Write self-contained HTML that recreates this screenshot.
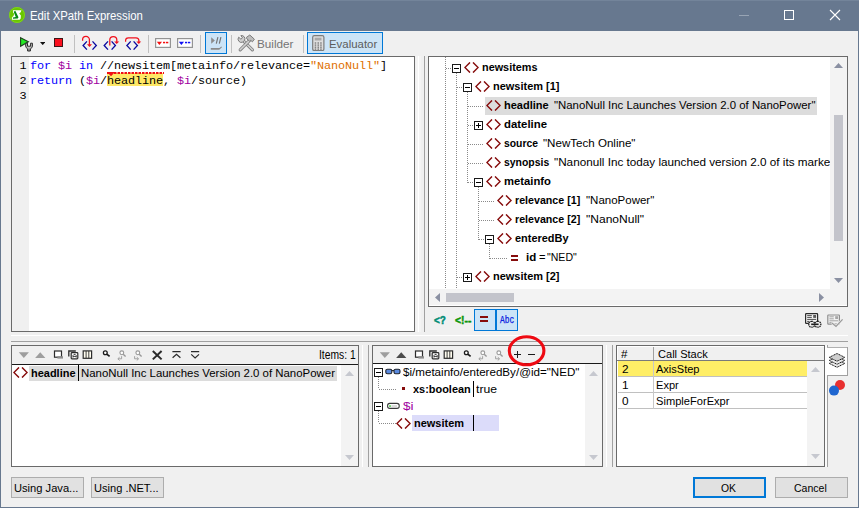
<!DOCTYPE html>
<html lang="en"><head><meta charset="utf-8"><title>Edit XPath Expression</title>
<style>
html,body{margin:0;padding:0;}
body{width:859px;height:508px;overflow:hidden;background:#f0f0f0;position:relative;font-family:"Liberation Sans",sans-serif;font-size:12px;}
#w{position:absolute;left:0;top:0;width:859px;height:508px;overflow:hidden;}
#w div,#w span,#w svg{position:absolute;box-sizing:content-box;}
.t{white-space:pre;display:block;transform-origin:0 0;}
.clip{overflow:hidden;}
</style></head><body><div id="w">

<div style="left:0px;top:0px;width:859px;height:31px;background:#67788f;"></div>
<div style="left:0px;top:0px;width:859px;height:1px;background:#73849a;"></div>
<div style="left:0px;top:31px;width:1px;height:477px;background:#67788f;"></div>
<div style="left:858px;top:31px;width:1px;height:477px;background:#67788f;"></div>
<div style="left:0px;top:507px;width:859px;height:1px;background:#67788f;"></div>
<svg style="left:8px;top:6px;" width="18" height="18" viewBox="8 6 18 18"><circle cx="17" cy="15" r="8" fill="#6ac600"/><circle cx="17" cy="15" r="7.5" fill="none" stroke="#82d424" stroke-width="0.9"/><path d="M12.9 10.2 H21.4 L20.7 12.2 L19.2 13.5 L20.9 15.6 L20.7 18.6 L19.6 19.7 H12 L11.8 17.6 L13.5 16 L14.2 13.8 L13 12.4 Z" fill="#fff"/><path d="M13.7 11.7 L15.3 10.8 L17.9 16 L18.5 17.3 L17.8 18.5 L13 18.8 L12.8 17.5 L15.7 17 Z" fill="#078a14"/></svg>
<span class="t" style="left:29.90px;top:8.00px;height:16px;line-height:16px;font-size:12px;color:#fff;transform:scaleX(0.9448);">Edit XPath Expression</span>
<div style="left:739px;top:15px;width:10px;height:1px;background:#98a4b4;"></div>
<div style="left:784px;top:10px;width:9px;height:9px;border:1px solid #fff;width:8px;height:8px;"></div>
<svg style="left:829px;top:9px;" width="12" height="12" viewBox="0 0 12 12"><path d="M1 1 L11 11 M11 1 L1 11" stroke="#fff" stroke-width="1.1" fill="none"/></svg>
<svg style="left:16px;top:34px;" width="20" height="20" viewBox="16 34 20 20"><path d="M20.6 37.7 L28.4 41.7 L20.6 46.2 Z" fill="#24ea24" stroke="#1e3e1e" stroke-width="1.1"/><path d="M25.7 43.2 V46 A3.4 3.2 0 0 0 27.6 48.8 V51 H30.4 V48.8 A3.4 3.2 0 0 0 32.4 46 V43.2 H30.6 V46.2 H27.5 V43.2 Z" fill="#bcbcbc" stroke="#2a2a2a" stroke-width="1"/><path d="M29 48.6 V51" stroke="#383838" stroke-width="0.6"/></svg>
<svg style="left:40px;top:42px;" width="5.4" height="3.1" viewBox="0 0 5.4 3.1"><polygon points="0,0 5.4,0 2.7,3.1" fill="#111"/></svg>
<div style="left:54px;top:38px;width:7px;height:7px;background:#fb101e;border:1px solid #3c1616;"></div>
<div style="left:74px;top:35px;width:1px;height:18px;background:#c0c0c0;"></div>
<svg style="left:78px;top:32px;" width="68" height="24" viewBox="78 32 68 24"><path d="M86.89999999999999 41.4 L83.1 45.5 L86.89999999999999 49.6 M92.5 41.4 L96.3 45.5 L92.5 49.6" fill="none" stroke="#0a0aa0" stroke-width="1.35"/><path d="M82.6 40.8 V39.6 A3.4 3.2 0 0 1 89.4 39.6 V45" fill="none" stroke="#f0101c" stroke-width="1.25"/><path d="M87 44.2 H92 L89.5 46.9 Z" fill="#f0101c"/><path d="M108.0 41.4 L104.2 45.5 L108.0 49.6 M111.60000000000001 41.4 L115.4 45.5 L111.60000000000001 49.6" fill="none" stroke="#0a0aa0" stroke-width="1.35"/><path d="M109.8 45.6 V39.8 A3.5 3.3 0 0 1 116.8 39.8 V42" fill="none" stroke="#f0101c" stroke-width="1.25"/><path d="M114.2 41.4 H119.2 L116.7 44.1 Z" fill="#f0101c"/><path d="M130.70000000000002 41.4 L126.9 45.5 L130.70000000000002 49.6 M133.6 41.4 L137.4 45.5 L133.6 49.6" fill="none" stroke="#0a0aa0" stroke-width="1.35"/><path d="M125.6 41.8 V40.6 A2.8 2.8 0 0 1 128.4 37.8 H136 A2.9 2.9 0 0 1 138.9 40.7 V42" fill="none" stroke="#f0101c" stroke-width="1.25"/><path d="M136.4 41.4 H141.2 L138.8 44.1 Z" fill="#f0101c"/></svg>
<div style="left:148px;top:35px;width:1px;height:18px;background:#c0c0c0;"></div>
<svg style="left:155px;top:38px;" width="16" height="10" viewBox="0 0 16 10"><rect x="0.6" y="0.6" width="14.8" height="8.8" fill="#fff" stroke="#949494" stroke-width="1.2"/><path d="M1.8 3.8 H7 L4.4 7 Z" fill="#f41010"/><rect x="8" y="3.8" width="2.2" height="1.5" fill="#f41010"/><rect x="11" y="3.8" width="2.3" height="1.5" fill="#f41010"/></svg>
<svg style="left:177px;top:38px;" width="16" height="10" viewBox="0 0 16 10"><rect x="0.6" y="0.6" width="14.8" height="8.8" fill="#fff" stroke="#949494" stroke-width="1.2"/><path d="M1.8 3.8 H7 L4.4 7 Z" fill="#1010f4"/><rect x="8" y="3.8" width="2.2" height="1.5" fill="#1010f4"/><rect x="11" y="3.8" width="2.3" height="1.5" fill="#1010f4"/></svg>
<div style="left:200px;top:35px;width:1px;height:18px;background:#c0c0c0;"></div>
<div style="left:205px;top:32px;width:20px;height:20px;background:#cce4f7;border:1px solid #0078d7;"></div>
<svg style="left:206px;top:33px;" width="20" height="20" viewBox="206 33 20 20"><path d="M211.2 37.2 L214.9 40.5 L211.2 43.8 Z" fill="#8c8c8c"/><path d="M217.9 37.1 L216.3 43.6 M220.9 37.1 L219.3 43.6" stroke="#757575" stroke-width="1.2" fill="none"/><path d="M210.8 48 H219.4 L221.4 46.6 L222 47.2 L219.2 49.8 H210.8 Z" fill="#8a8a8a"/></svg>
<div style="left:231px;top:35px;width:1px;height:18px;background:#c0c0c0;"></div>
<svg style="left:236px;top:33px;" width="22" height="21" viewBox="236 33 22 21"><g stroke-linecap="round"><path d="M252.4 49.8 L243.4 40.8" stroke="#808080" stroke-width="3.2"/><path d="M252.4 49.8 L243.4 40.8" stroke="#d2d2d2" stroke-width="1.5"/><path d="M240.2 49.8 L249.6 40.4" stroke="#808080" stroke-width="3.2"/><path d="M240.2 49.8 L249.6 40.4" stroke="#d2d2d2" stroke-width="1.5"/></g><path d="M246.4 37.4 L249.8 35 L254.4 39.2 L252.4 41.8 L250.8 40.4 L249.6 41.2 L246.8 38.8 Z" fill="#bdbdbd" stroke="#7c7c7c" stroke-width="1"/><path d="M238.7 37.2 L240.9 39.2 L242.5 37.8 L240.9 35.6 A3.3 3.3 0 0 1 244.6 40.2 L242.6 42.2 A3.3 3.3 0 0 1 238.7 37.2 Z" fill="#cfcfcf" stroke="#7c7c7c" stroke-width="1"/></svg>
<span class="t" style="left:256.50px;top:36.00px;height:16px;line-height:16px;font-size:11.8px;color:#747474;transform:scaleX(0.9910);">Builder</span>
<div style="left:303px;top:35px;width:1px;height:18px;background:#c0c0c0;"></div>
<div style="left:307px;top:32px;width:74px;height:20px;background:#cce4f7;border:1px solid #0078d7;"></div>
<svg style="left:312px;top:35px;" width="13" height="16" viewBox="0 0 13 16"><rect x="0.7" y="0.7" width="11.2" height="14.8" rx="1.6" fill="#dedede" stroke="#7c7c7c" stroke-width="1.2"/><rect x="2.7" y="2.7" width="6.8" height="2.8" fill="#a9a9a9"/><rect x="2.7" y="7.3" width="1.5" height="1.4" fill="#7c7c7c"/><rect x="5.5" y="7.3" width="1.5" height="1.4" fill="#7c7c7c"/><rect x="8.2" y="7.3" width="1.5" height="1.4" fill="#7c7c7c"/><rect x="2.7" y="9.4" width="1.5" height="1.4" fill="#7c7c7c"/><rect x="5.5" y="9.4" width="1.5" height="1.4" fill="#7c7c7c"/><rect x="8.2" y="9.4" width="1.5" height="1.4" fill="#7c7c7c"/><rect x="2.7" y="11.5" width="1.5" height="1.4" fill="#7c7c7c"/><rect x="5.5" y="11.5" width="1.5" height="1.4" fill="#7c7c7c"/><rect x="8.2" y="11.5" width="1.5" height="1.4" fill="#7c7c7c"/><rect x="2.7" y="13.4" width="1.5" height="1.4" fill="#7c7c7c"/><rect x="5.5" y="13.4" width="1.5" height="1.4" fill="#7c7c7c"/><rect x="8.2" y="13.4" width="1.5" height="1.4" fill="#7c7c7c"/></svg>
<span class="t" style="left:329.10px;top:36.00px;height:16px;line-height:16px;font-size:11.8px;color:#5c5c5c;transform:scaleX(0.9669);">Evaluator</span>
<div style="left:11px;top:56px;width:402px;height:274px;border:1px solid #6a6a6a;background:#fff;"></div>
<div style="left:12px;top:57px;width:17px;height:274px;background:#f0f0f0;"></div>
<div style="left:107px;top:73px;width:56px;height:13px;background:#ffe866;"></div>
<span class="t" style="left:19.50px;top:59.36px;height:15px;line-height:15px;font-size:11.8px;letter-spacing:-0.080px;color:#000;font-family:'Liberation Mono',monospace;">1</span>
<span class="t" style="left:19.50px;top:74.36px;height:15px;line-height:15px;font-size:11.8px;letter-spacing:-0.080px;color:#000;font-family:'Liberation Mono',monospace;">2</span>
<span class="t" style="left:19.50px;top:89.36px;height:15px;line-height:15px;font-size:11.8px;letter-spacing:-0.080px;color:#000;font-family:'Liberation Mono',monospace;">3</span>
<span class="t" style="left:30.00px;top:59.36px;height:15px;line-height:15px;font-size:11.8px;letter-spacing:-0.080px;color:#0000ff;font-family:'Liberation Mono',monospace;">for</span>
<span class="t" style="left:58.00px;top:59.36px;height:15px;line-height:15px;font-size:11.8px;letter-spacing:-0.080px;color:#a000a0;font-family:'Liberation Mono',monospace;">$i</span>
<span class="t" style="left:79.00px;top:59.36px;height:15px;line-height:15px;font-size:11.8px;letter-spacing:-0.080px;color:#0000ff;font-family:'Liberation Mono',monospace;">in</span>
<span class="t" style="left:100.00px;top:59.36px;height:15px;line-height:15px;font-size:11.8px;letter-spacing:-0.080px;color:#000;font-family:'Liberation Mono',monospace;">//newsitem[metainfo/relevance=</span>
<span class="t" style="left:310.00px;top:59.36px;height:15px;line-height:15px;font-size:11.8px;letter-spacing:-0.080px;color:#e07000;font-family:'Liberation Mono',monospace;">&quot;NanoNull&quot;</span>
<span class="t" style="left:380.00px;top:59.36px;height:15px;line-height:15px;font-size:11.8px;letter-spacing:-0.080px;color:#000;font-family:'Liberation Mono',monospace;">]</span>
<span class="t" style="left:30.00px;top:74.36px;height:15px;line-height:15px;font-size:11.8px;letter-spacing:-0.080px;color:#0000ff;font-family:'Liberation Mono',monospace;">return</span>
<span class="t" style="left:79.00px;top:74.36px;height:15px;line-height:15px;font-size:11.8px;letter-spacing:-0.080px;color:#000;font-family:'Liberation Mono',monospace;">(</span>
<span class="t" style="left:86.00px;top:74.36px;height:15px;line-height:15px;font-size:11.8px;letter-spacing:-0.080px;color:#a000a0;font-family:'Liberation Mono',monospace;">$i</span>
<span class="t" style="left:100.00px;top:74.36px;height:15px;line-height:15px;font-size:11.8px;letter-spacing:-0.080px;color:#000;font-family:'Liberation Mono',monospace;">/headline,</span>
<span class="t" style="left:177.00px;top:74.36px;height:15px;line-height:15px;font-size:11.8px;letter-spacing:-0.080px;color:#a000a0;font-family:'Liberation Mono',monospace;">$i</span>
<span class="t" style="left:191.00px;top:74.36px;height:15px;line-height:15px;font-size:11.8px;letter-spacing:-0.080px;color:#000;font-family:'Liberation Mono',monospace;">/source)</span>
<svg style="left:106px;top:71px;" width="60" height="7" viewBox="106 71 60 7"><path d="M107 73 H164" stroke="#f01018" stroke-width="2" stroke-dasharray="2.5 1"/><path d="M107 72 H115 L111 76.2 Z" fill="#f01018"/></svg>
<div style="left:416px;top:56px;width:5px;height:276px;background:#f4f4f4;"></div>
<div style="left:418px;top:56px;width:1px;height:276px;background:#fff;"></div>
<div style="left:424px;top:56px;width:1px;height:276px;background:#a0a0a0;"></div>
<div style="left:428px;top:56px;width:418px;height:249px;border:1px solid #6a6a6a;background:#fff;"></div>
<div style="left:830px;top:57px;width:17px;height:232px;background:#f3f3f3;"></div>
<div style="left:429px;top:289px;width:418px;height:16px;background:#f3f3f3;"></div>
<svg style="left:834px;top:63px;" width="9" height="5" viewBox="0 0 9 5"><polygon points="0,5 4.5,0 9,5" fill="#8a90a2"/></svg>
<svg style="left:834px;top:278px;" width="9" height="5" viewBox="0 0 9 5"><polygon points="0,0 9,0 4.5,5" fill="#8a90a2"/></svg>
<div style="left:834px;top:115px;width:9px;height:126px;background:#c3c4cb;"></div>
<svg style="left:435px;top:293px;" width="5" height="9" viewBox="0 0 5 9"><polygon points="5,0 0,4.5 5,9" fill="#8a90a2"/></svg>
<svg style="left:819px;top:293px;" width="5" height="9" viewBox="0 0 5 9"><polygon points="0,0 5,4.5 0,9" fill="#8a90a2"/></svg>
<div style="left:446px;top:293px;width:68px;height:9px;background:#c3c4cb;"></div>
<div class="clip" style="left:429px;top:57px;width:401px;height:232px;">
<div style="left:16px;top:0px;width:1px;height:232px;background:repeating-linear-gradient(180deg,#8a8a8a 0 1px,transparent 1px 2px);"></div>
<div style="left:27px;top:16px;width:1px;height:216px;background:repeating-linear-gradient(180deg,#8a8a8a 0 1px,transparent 1px 2px);"></div>
<div style="left:38px;top:35px;width:1px;height:91px;background:repeating-linear-gradient(180deg,#8a8a8a 0 1px,transparent 1px 2px);"></div>
<div style="left:49px;top:130px;width:1px;height:53px;background:repeating-linear-gradient(180deg,#8a8a8a 0 1px,transparent 1px 2px);"></div>
<div style="left:60px;top:187px;width:1px;height:15px;background:repeating-linear-gradient(180deg,#8a8a8a 0 1px,transparent 1px 2px);"></div>
<div style="left:17px;top:11px;width:6px;height:1px;background:repeating-linear-gradient(90deg,#8a8a8a 0 1px,transparent 1px 2px);"></div>
<div style="left:28px;top:30px;width:6px;height:1px;background:repeating-linear-gradient(90deg,#8a8a8a 0 1px,transparent 1px 2px);"></div>
<div style="left:39px;top:49px;width:16px;height:1px;background:repeating-linear-gradient(90deg,#8a8a8a 0 1px,transparent 1px 2px);"></div>
<div style="left:39px;top:68px;width:6px;height:1px;background:repeating-linear-gradient(90deg,#8a8a8a 0 1px,transparent 1px 2px);"></div>
<div style="left:39px;top:87px;width:16px;height:1px;background:repeating-linear-gradient(90deg,#8a8a8a 0 1px,transparent 1px 2px);"></div>
<div style="left:39px;top:106px;width:16px;height:1px;background:repeating-linear-gradient(90deg,#8a8a8a 0 1px,transparent 1px 2px);"></div>
<div style="left:39px;top:125px;width:6px;height:1px;background:repeating-linear-gradient(90deg,#8a8a8a 0 1px,transparent 1px 2px);"></div>
<div style="left:50px;top:144px;width:16px;height:1px;background:repeating-linear-gradient(90deg,#8a8a8a 0 1px,transparent 1px 2px);"></div>
<div style="left:50px;top:163px;width:16px;height:1px;background:repeating-linear-gradient(90deg,#8a8a8a 0 1px,transparent 1px 2px);"></div>
<div style="left:50px;top:182px;width:6px;height:1px;background:repeating-linear-gradient(90deg,#8a8a8a 0 1px,transparent 1px 2px);"></div>
<div style="left:61px;top:201px;width:17px;height:1px;background:repeating-linear-gradient(90deg,#8a8a8a 0 1px,transparent 1px 2px);"></div>
<div style="left:28px;top:220px;width:6px;height:1px;background:repeating-linear-gradient(90deg,#8a8a8a 0 1px,transparent 1px 2px);"></div>
<div style="left:56px;top:40px;width:332px;height:18px;background:#dcdcdc;"></div>
<div style="left:23px;top:7px;width:7px;height:7px;border:1px solid #1a1a1a;background:#fff;"></div>
<div style="left:25px;top:11px;width:5px;height:1px;background:#000;"></div>
<svg style="left:35px;top:5.0px;" width="15" height="11" viewBox="0 0 15 11"><path d="M6 0.4 L0.9 5.5 L6 10.6 M9 0.4 L14.1 5.5 L9 10.6" fill="none" stroke="#860c0c" stroke-width="1.4" stroke-linecap="butt" stroke-linejoin="miter"/></svg>
<span class="t" style="left:52.80px;top:2.00px;height:16px;line-height:16px;font-size:11.8px;color:#000;font-weight:bold;transform:scaleX(0.9199);">newsitems</span>
<div style="left:34px;top:26px;width:7px;height:7px;border:1px solid #1a1a1a;background:#fff;"></div>
<div style="left:36px;top:30px;width:5px;height:1px;background:#000;"></div>
<svg style="left:46px;top:24.0px;" width="15" height="11" viewBox="0 0 15 11"><path d="M6 0.4 L0.9 5.5 L6 10.6 M9 0.4 L14.1 5.5 L9 10.6" fill="none" stroke="#860c0c" stroke-width="1.4" stroke-linecap="butt" stroke-linejoin="miter"/></svg>
<span class="t" style="left:63.80px;top:21.00px;height:16px;line-height:16px;font-size:11.8px;color:#000;font-weight:bold;transform:scaleX(0.9305);">newsitem [1]</span>
<svg style="left:57px;top:43.0px;" width="15" height="11" viewBox="0 0 15 11"><path d="M6 0.4 L0.9 5.5 L6 10.6 M9 0.4 L14.1 5.5 L9 10.6" fill="none" stroke="#860c0c" stroke-width="1.4" stroke-linecap="butt" stroke-linejoin="miter"/></svg>
<span class="t" style="left:74.80px;top:40.00px;height:16px;line-height:16px;font-size:11.8px;color:#000;font-weight:bold;transform:scaleX(0.9349);">headline</span>
<span class="t" style="left:125.30px;top:40.00px;height:16px;line-height:16px;font-size:11.8px;color:#000;transform:scaleX(0.9659);">&quot;NanoNull Inc Launches Version 2.0 of NanoPower&quot;</span>
<div style="left:45px;top:64px;width:7px;height:7px;border:1px solid #1a1a1a;background:#fff;"></div>
<div style="left:47px;top:68px;width:5px;height:1px;background:#000;"></div>
<div style="left:49px;top:66px;width:1px;height:5px;background:#000;"></div>
<svg style="left:57px;top:62.0px;" width="15" height="11" viewBox="0 0 15 11"><path d="M6 0.4 L0.9 5.5 L6 10.6 M9 0.4 L14.1 5.5 L9 10.6" fill="none" stroke="#860c0c" stroke-width="1.4" stroke-linecap="butt" stroke-linejoin="miter"/></svg>
<span class="t" style="left:74.80px;top:59.00px;height:16px;line-height:16px;font-size:11.8px;color:#000;font-weight:bold;transform:scaleX(0.9644);">dateline</span>
<svg style="left:57px;top:81.0px;" width="15" height="11" viewBox="0 0 15 11"><path d="M6 0.4 L0.9 5.5 L6 10.6 M9 0.4 L14.1 5.5 L9 10.6" fill="none" stroke="#860c0c" stroke-width="1.4" stroke-linecap="butt" stroke-linejoin="miter"/></svg>
<span class="t" style="left:74.80px;top:78.00px;height:16px;line-height:16px;font-size:11.8px;color:#000;font-weight:bold;transform:scaleX(0.8787);">source</span>
<span class="t" style="left:113.80px;top:78.00px;height:16px;line-height:16px;font-size:11.8px;color:#000;transform:scaleX(0.9810);">&quot;NewTech Online&quot;</span>
<svg style="left:57px;top:100.0px;" width="15" height="11" viewBox="0 0 15 11"><path d="M6 0.4 L0.9 5.5 L6 10.6 M9 0.4 L14.1 5.5 L9 10.6" fill="none" stroke="#860c0c" stroke-width="1.4" stroke-linecap="butt" stroke-linejoin="miter"/></svg>
<span class="t" style="left:74.80px;top:97.00px;height:16px;line-height:16px;font-size:11.8px;color:#000;font-weight:bold;transform:scaleX(0.8847);">synopsis</span>
<span class="t" style="left:125.30px;top:97.00px;height:16px;line-height:16px;font-size:11.8px;color:#000;transform:scaleX(0.9930);">&quot;Nanonull Inc today launched version 2.0 of its marketing</span>
<div style="left:45px;top:121px;width:7px;height:7px;border:1px solid #1a1a1a;background:#fff;"></div>
<div style="left:47px;top:125px;width:5px;height:1px;background:#000;"></div>
<svg style="left:57px;top:119.0px;" width="15" height="11" viewBox="0 0 15 11"><path d="M6 0.4 L0.9 5.5 L6 10.6 M9 0.4 L14.1 5.5 L9 10.6" fill="none" stroke="#860c0c" stroke-width="1.4" stroke-linecap="butt" stroke-linejoin="miter"/></svg>
<span class="t" style="left:74.80px;top:116.00px;height:16px;line-height:16px;font-size:11.8px;color:#000;font-weight:bold;transform:scaleX(0.9559);">metainfo</span>
<svg style="left:68px;top:138.0px;" width="15" height="11" viewBox="0 0 15 11"><path d="M6 0.4 L0.9 5.5 L6 10.6 M9 0.4 L14.1 5.5 L9 10.6" fill="none" stroke="#860c0c" stroke-width="1.4" stroke-linecap="butt" stroke-linejoin="miter"/></svg>
<span class="t" style="left:85.80px;top:135.00px;height:16px;line-height:16px;font-size:11.8px;color:#000;font-weight:bold;transform:scaleX(0.9044);">relevance [1]</span>
<span class="t" style="left:156.55px;top:135.00px;height:16px;line-height:16px;font-size:11.8px;color:#000;transform:scaleX(0.9746);">&quot;NanoPower&quot;</span>
<svg style="left:68px;top:157.0px;" width="15" height="11" viewBox="0 0 15 11"><path d="M6 0.4 L0.9 5.5 L6 10.6 M9 0.4 L14.1 5.5 L9 10.6" fill="none" stroke="#860c0c" stroke-width="1.4" stroke-linecap="butt" stroke-linejoin="miter"/></svg>
<span class="t" style="left:85.80px;top:154.00px;height:16px;line-height:16px;font-size:11.8px;color:#000;font-weight:bold;transform:scaleX(0.9044);">relevance [2]</span>
<span class="t" style="left:156.55px;top:154.00px;height:16px;line-height:16px;font-size:11.8px;color:#000;transform:scaleX(1.0200);">&quot;NanoNull&quot;</span>
<div style="left:56px;top:178px;width:7px;height:7px;border:1px solid #1a1a1a;background:#fff;"></div>
<div style="left:58px;top:182px;width:5px;height:1px;background:#000;"></div>
<svg style="left:68px;top:176.0px;" width="15" height="11" viewBox="0 0 15 11"><path d="M6 0.4 L0.9 5.5 L6 10.6 M9 0.4 L14.1 5.5 L9 10.6" fill="none" stroke="#860c0c" stroke-width="1.4" stroke-linecap="butt" stroke-linejoin="miter"/></svg>
<span class="t" style="left:85.80px;top:173.00px;height:16px;line-height:16px;font-size:11.8px;color:#000;font-weight:bold;transform:scaleX(0.9271);">enteredBy</span>
<div style="left:82px;top:198px;width:7px;height:2px;background:#860c0c;"></div>
<div style="left:82px;top:202px;width:7px;height:2px;background:#860c0c;"></div>
<span class="t" style="left:96.55px;top:192.00px;height:16px;line-height:16px;font-size:11.8px;color:#000;font-weight:bold;transform:scaleX(0.9775);">id</span>
<span class="t" style="left:109.55px;top:192.00px;height:16px;line-height:16px;font-size:11.8px;color:#000;transform:scaleX(0.9431);">=</span>
<span class="t" style="left:117.55px;top:192.00px;height:16px;line-height:16px;font-size:11.8px;color:#000;transform:scaleX(0.8936);">&quot;NED&quot;</span>
<div style="left:34px;top:216px;width:7px;height:7px;border:1px solid #1a1a1a;background:#fff;"></div>
<div style="left:36px;top:220px;width:5px;height:1px;background:#000;"></div>
<div style="left:38px;top:218px;width:1px;height:5px;background:#000;"></div>
<svg style="left:46px;top:214.0px;" width="15" height="11" viewBox="0 0 15 11"><path d="M6 0.4 L0.9 5.5 L6 10.6 M9 0.4 L14.1 5.5 L9 10.6" fill="none" stroke="#860c0c" stroke-width="1.4" stroke-linecap="butt" stroke-linejoin="miter"/></svg>
<span class="t" style="left:63.80px;top:211.00px;height:16px;line-height:16px;font-size:11.8px;color:#000;font-weight:bold;transform:scaleX(0.9305);">newsitem [2]</span>
</div>
<span class="t" style="left:433.70px;top:312.00px;height:16px;line-height:16px;font-size:11.8px;color:#008c74;font-weight:bold;transform:scaleX(0.8440);-webkit-text-stroke:0.5px #008c74;">&lt;?</span>
<span class="t" style="left:454.70px;top:312.00px;height:16px;line-height:16px;font-size:11.8px;color:#0a960a;font-weight:bold;transform:scaleX(0.8780);-webkit-text-stroke:0.5px #0a960a;">&lt;!--</span>
<div style="left:474px;top:309px;width:20px;height:20px;background:#cce4f7;border:1px solid #0078d7;"></div>
<div style="left:496px;top:309px;width:20px;height:20px;background:#cce4f7;border:1px solid #0078d7;"></div>
<div style="left:480px;top:316px;width:8px;height:2px;background:#860c0c;"></div>
<div style="left:480px;top:320px;width:8px;height:2px;background:#860c0c;"></div>
<span class="t" style="left:499.70px;top:314.00px;height:13px;line-height:13px;font-size:10px;color:#0a22e0;font-family:'Liberation Mono',monospace;transform:scaleX(0.7887);-webkit-text-stroke:0.25px #0a22e0;">Abc</span>
<svg style="left:803px;top:311px;" width="43" height="20" viewBox="803 311 43 20"><rect x="805.6" y="313.6" width="12" height="9.8" rx="0.6" fill="#f4f4f4" stroke="#2c2c2c" stroke-width="1.2"/><path d="M807.2 315.6 H811.8 M807.2 317.4 H811.8 M807.2 319.4 H816.2 M807.2 321.4 H809.4" stroke="#3a3a3a" stroke-width="0.9"/><rect x="813.2" y="315" width="2.9" height="2.9" fill="#5a5a5a"/><rect x="808.8" y="321.4" width="6" height="5.8" rx="2.6" fill="#f0f0f0" stroke="#1e1e1e" stroke-width="1.3" stroke-dasharray="1.5 0.7"/><rect x="814.8" y="321.4" width="6" height="5.8" rx="2.6" fill="#f0f0f0" stroke="#1e1e1e" stroke-width="1.3" stroke-dasharray="1.5 0.7"/><path d="M811.2 324.3 H818.6" stroke="#1e1e1e" stroke-width="1.6"/><rect x="827.8" y="315" width="11.6" height="9.2" rx="0.6" fill="#f2f2f2" stroke="#8e8e8e" stroke-width="1.2"/><path d="M829.4 316.8 H833.8 M829.4 318.8 H833.8 M829.4 320.8 H838 M829.4 322.6 H831.6" stroke="#9c9c9c" stroke-width="0.9"/><rect x="835.2" y="316.2" width="2.8" height="2.8" fill="#a6a6a6"/><path d="M832 323 L836 326.4 L842.6 319.4" fill="none" stroke="#f0f0f0" stroke-width="2.6"/><path d="M832 323 L836 326.4 L842.6 319.4" fill="none" stroke="#9a9a9a" stroke-width="1.3"/></svg>
<div style="left:11px;top:335px;width:837px;height:1px;background:#fff;"></div>
<div style="left:11px;top:341px;width:837px;height:1px;background:#a0a0a0;"></div>
<div style="left:11px;top:345px;width:346px;height:120px;border:1px solid #6a6a6a;background:#fff;"></div>
<div style="left:12px;top:346px;width:346px;height:18px;background:#f0f0f0;"></div>
<div style="left:12px;top:364px;width:346px;height:1px;background:#1a1a1a;"></div>
<div style="left:341px;top:365px;width:17px;height:101px;background:#f3f3f3;"></div>
<svg style="left:345px;top:371px;" width="9" height="5" viewBox="0 0 9 5"><polygon points="0,5 4.5,0 9,5" fill="#c6c8cf"/></svg>
<svg style="left:345px;top:455px;" width="9" height="5" viewBox="0 0 9 5"><polygon points="0,0 9,0 4.5,5" fill="#c6c8cf"/></svg>
<svg style="left:12px;top:346px;" width="200" height="18" viewBox="12 346 200 18"><g transform="translate(0 0)"><polygon points="18.8,352.2 28.9,352.2 23.85,357.9" fill="#9e9e9e"/><polygon points="35.1,357.9 45.4,357.9 40.25,352.2" fill="#9e9e9e"/><rect x="54.5" y="351" width="7" height="6.2" fill="#fff" stroke="#2c2c2c" stroke-width="1.2"/><rect x="57.4" y="356.2" width="5.6" height="2.4" fill="#8e8e8e"/><path d="M68.8 356.6 V351 H75.8" fill="none" stroke="#2c2c2c" stroke-width="1.3"/><rect x="71.2" y="352.6" width="6.6" height="6.2" rx="0.8" fill="#fff" stroke="#2c2c2c" stroke-width="1.2"/><path d="M73 357.6 V355.4 L74 354.4 H75.2 L76.2 355.4 V357.6 M73 356.4 H76.2" fill="none" stroke="#2c2c2c" stroke-width="0.9"/><rect x="83.2" y="350.9" width="8.4" height="7.4" fill="#fffdf0" stroke="#2c2c2c" stroke-width="1.2"/><path d="M86.1 351 V358.2 M88.8 351 V358.2" stroke="#2c2c2c" stroke-width="0.9"/><circle cx="105.3" cy="352.8" r="1.9" fill="#fff" stroke="#1a1a1a" stroke-width="1.3"/><path d="M106.8 354.2 L109.6 356.4" stroke="#1a1a1a" stroke-width="1.7"/><circle cx="121.8" cy="352.8" r="1.9" fill="#fff" stroke="#989898" stroke-width="1.1"/><path d="M123.2 354.2 L125.6 356.4" stroke="#989898" stroke-width="1.4"/><path d="M121.6 356.2 V358.8 H118.2 M119.6 357.2 L117.8 358.8 L119.6 360.4" fill="none" stroke="#989898" stroke-width="0.9"/><circle cx="137.8" cy="352.8" r="1.9" fill="#fff" stroke="#989898" stroke-width="1.1"/><path d="M139.2 354.2 L141.6 356.4" stroke="#989898" stroke-width="1.4"/><path d="M134.6 356.2 V358.8 H138.2 M136.8 357.2 L138.6 358.8 L136.8 360.4" fill="none" stroke="#989898" stroke-width="0.9"/><path d="M152.8 351 L161.6 359.4 M161.6 351 L152.8 359.4" stroke="#2a2a2a" stroke-width="2" fill="none"/><path d="M172.4 351.6 H180.6 M172.6 357.8 L176.5 354.2 L180.4 357.8" stroke="#2a2a2a" stroke-width="1.2" fill="none"/><path d="M191 351.6 H199.2 M191.2 354.4 L195.1 358 L199 354.4" stroke="#2a2a2a" stroke-width="1.2" fill="none"/></g></svg>
<span class="t" style="left:318.70px;top:347.00px;height:16px;line-height:16px;font-size:12px;color:#000;transform:scaleX(0.8576);">Items: 1</span>
<div style="left:29px;top:366px;width:308px;height:15px;background:#dcdcdc;"></div>
<svg style="left:13px;top:366.8px;" width="15" height="11" viewBox="0 0 15 11"><path d="M6 0.4 L0.9 5.5 L6 10.6 M9 0.4 L14.1 5.5 L9 10.6" fill="none" stroke="#860c0c" stroke-width="1.4" stroke-linecap="butt" stroke-linejoin="miter"/></svg>
<span class="t" style="left:30.80px;top:365.00px;height:16px;line-height:16px;font-size:11.8px;color:#000;font-weight:bold;transform:scaleX(0.9297);">headline</span>
<div style="left:78px;top:365px;width:1px;height:16px;background:#000;"></div>
<span class="t" style="left:81.05px;top:365.00px;height:16px;line-height:16px;font-size:11.8px;color:#000;transform:scaleX(0.9681);">NanoNull Inc Launches Version 2.0 of NanoPower</span>
<div style="left:362px;top:345px;width:1px;height:122px;background:#fff;"></div>
<div style="left:368px;top:345px;width:1px;height:122px;background:#a0a0a0;"></div>
<div style="left:372px;top:345px;width:229px;height:120px;border:1px solid #6a6a6a;background:#fff;"></div>
<div style="left:373px;top:346px;width:229px;height:17px;background:#f0f0f0;"></div>
<div style="left:373px;top:363px;width:229px;height:1px;background:#1a1a1a;"></div>
<div style="left:585px;top:364px;width:17px;height:102px;background:#f3f3f3;"></div>
<svg style="left:589px;top:371px;" width="9" height="5" viewBox="0 0 9 5"><polygon points="0,5 4.5,0 9,5" fill="#c6c8cf"/></svg>
<svg style="left:589px;top:455px;" width="9" height="5" viewBox="0 0 9 5"><polygon points="0,0 9,0 4.5,5" fill="#c6c8cf"/></svg>
<svg style="left:373px;top:346px;" width="200" height="18" viewBox="373 346 200 18"><g transform="translate(361 0)"><polygon points="18.8,352.2 28.9,352.2 23.85,357.9" fill="#9e9e9e"/><polygon points="35.1,357.9 45.4,357.9 40.25,352.2" fill="#4c4c4c"/><rect x="54.5" y="351" width="7" height="6.2" fill="#fff" stroke="#2c2c2c" stroke-width="1.2"/><rect x="57.4" y="356.2" width="5.6" height="2.4" fill="#8e8e8e"/><path d="M68.8 356.6 V351 H75.8" fill="none" stroke="#2c2c2c" stroke-width="1.3"/><rect x="71.2" y="352.6" width="6.6" height="6.2" rx="0.8" fill="#fff" stroke="#2c2c2c" stroke-width="1.2"/><path d="M73 357.6 V355.4 L74 354.4 H75.2 L76.2 355.4 V357.6 M73 356.4 H76.2" fill="none" stroke="#2c2c2c" stroke-width="0.9"/><rect x="83.2" y="350.9" width="8.4" height="7.4" fill="#fffdf0" stroke="#2c2c2c" stroke-width="1.2"/><path d="M86.1 351 V358.2 M88.8 351 V358.2" stroke="#2c2c2c" stroke-width="0.9"/><circle cx="105.3" cy="352.8" r="1.9" fill="#fff" stroke="#1a1a1a" stroke-width="1.3"/><path d="M106.8 354.2 L109.6 356.4" stroke="#1a1a1a" stroke-width="1.7"/><circle cx="121.8" cy="352.8" r="1.9" fill="#fff" stroke="#989898" stroke-width="1.1"/><path d="M123.2 354.2 L125.6 356.4" stroke="#989898" stroke-width="1.4"/><path d="M121.6 356.2 V358.8 H118.2 M119.6 357.2 L117.8 358.8 L119.6 360.4" fill="none" stroke="#989898" stroke-width="0.9"/><circle cx="137.8" cy="352.8" r="1.9" fill="#fff" stroke="#989898" stroke-width="1.1"/><path d="M139.2 354.2 L141.6 356.4" stroke="#989898" stroke-width="1.4"/><path d="M134.6 356.2 V358.8 H138.2 M136.8 357.2 L138.6 358.8 L136.8 360.4" fill="none" stroke="#989898" stroke-width="0.9"/></g></svg>
<div style="left:514px;top:354px;width:7px;height:1px;background:#1a1a1a;"></div>
<div style="left:517px;top:351px;width:1px;height:7px;background:#1a1a1a;"></div>
<div style="left:528px;top:354px;width:7px;height:1px;background:#1a1a1a;"></div>
<svg style="left:505px;top:332px;" width="44" height="38" viewBox="505 332 44 38"><ellipse cx="526.6" cy="350.8" rx="17.3" ry="14" fill="none" stroke="#ee0a12" stroke-width="3.1"/></svg>
<div style="left:374px;top:368px;width:7px;height:7px;border:1px solid #1a1a1a;background:#fff;"></div>
<div style="left:376px;top:372px;width:5px;height:1px;background:#000;"></div>
<div style="left:378px;top:377px;width:1px;height:12px;background:repeating-linear-gradient(180deg,#8a8a8a 0 1px,transparent 1px 2px);"></div>
<div style="left:379px;top:389px;width:17px;height:1px;background:repeating-linear-gradient(90deg,#8a8a8a 0 1px,transparent 1px 2px);"></div>
<svg style="left:385px;top:368px;" width="16" height="8" viewBox="0 0 16 8"><rect x="0.8" y="1.2" width="6" height="4.6" rx="1.6" fill="#5a8ae0" stroke="#20242c" stroke-width="1.1"/><rect x="9" y="1.2" width="6" height="4.6" rx="1.6" fill="#5a8ae0" stroke="#20242c" stroke-width="1.1"/><path d="M6.8 2.6 H9" stroke="#20242c" stroke-width="1.1"/></svg>
<span class="t" style="left:403.30px;top:364.00px;height:16px;line-height:16px;font-size:11.8px;color:#000;transform:scaleX(0.9838);">$i/metainfo/enteredBy/@id=&quot;NED&quot;</span>
<div style="left:402px;top:387px;width:3px;height:3px;background:#860c0c;"></div>
<span class="t" style="left:413.05px;top:381.00px;height:16px;line-height:16px;font-size:11.8px;color:#000;font-weight:bold;transform:scaleX(0.9272);">xs:boolean</span>
<div style="left:473px;top:381px;width:1px;height:16px;background:#000;"></div>
<span class="t" style="left:475.55px;top:381.00px;height:16px;line-height:16px;font-size:11.8px;color:#000;transform:scaleX(1.0329);">true</span>
<div style="left:374px;top:402px;width:7px;height:7px;border:1px solid #1a1a1a;background:#fff;"></div>
<div style="left:376px;top:406px;width:5px;height:1px;background:#000;"></div>
<div style="left:378px;top:411px;width:1px;height:12px;background:repeating-linear-gradient(180deg,#8a8a8a 0 1px,transparent 1px 2px);"></div>
<div style="left:379px;top:423px;width:17px;height:1px;background:repeating-linear-gradient(90deg,#8a8a8a 0 1px,transparent 1px 2px);"></div>
<svg style="left:387px;top:402px;" width="13" height="8" viewBox="0 0 13 8"><rect x="0.6" y="1.4" width="11.6" height="5" rx="2.2" fill="#fff" stroke="#3a3a3a" stroke-width="1.1"/><path d="M4.4 4 H10" stroke="#b8b8b8" stroke-width="1"/><rect x="2.2" y="3.3" width="1.6" height="1.5" fill="#22c022"/></svg>
<span class="t" style="left:403.30px;top:398.00px;height:16px;line-height:16px;font-size:11.8px;color:#a000a0;transform:scaleX(1.1433);">$i</span>
<div style="left:412px;top:415px;width:87px;height:16px;background:#dcdcfa;"></div>
<svg style="left:396px;top:417.5px;" width="15" height="11" viewBox="0 0 15 11"><path d="M6 0.4 L0.9 5.5 L6 10.6 M9 0.4 L14.1 5.5 L9 10.6" fill="none" stroke="#860c0c" stroke-width="1.4" stroke-linecap="butt" stroke-linejoin="miter"/></svg>
<span class="t" style="left:414.05px;top:415.00px;height:16px;line-height:16px;font-size:11.8px;color:#000;font-weight:bold;transform:scaleX(0.9299);">newsitem</span>
<div style="left:473px;top:415px;width:1px;height:16px;background:#000;"></div>
<div style="left:606px;top:345px;width:1px;height:122px;background:#fff;"></div>
<div style="left:612px;top:345px;width:1px;height:122px;background:#a0a0a0;"></div>
<div style="left:616px;top:345px;width:207px;height:120px;border:1px solid #6a6a6a;background:#fff;"></div>
<div style="left:617px;top:346px;width:207px;height:14px;background:#f0f0f0;"></div>
<div style="left:617px;top:346px;width:207px;height:1px;background:#fff;"></div>
<div style="left:617px;top:346px;width:1px;height:14px;background:#fff;"></div>
<div style="left:617px;top:360px;width:207px;height:1px;background:#7a7a7a;"></div>
<div style="left:653px;top:347px;width:1px;height:13px;background:#a0a0a0;"></div>
<span class="t" style="left:621.30px;top:346.00px;height:16px;line-height:16px;font-size:11.8px;color:#000;transform:scaleX(0.9906);">#</span>
<span class="t" style="left:657.90px;top:346.00px;height:16px;line-height:16px;font-size:11.8px;color:#000;transform:scaleX(0.9376);">Call Stack</span>
<div style="left:807px;top:361px;width:17px;height:105px;background:#f3f3f3;"></div>
<svg style="left:811px;top:367px;" width="9" height="5" viewBox="0 0 9 5"><polygon points="0,5 4.5,0 9,5" fill="#c6c8cf"/></svg>
<svg style="left:811px;top:454px;" width="9" height="5" viewBox="0 0 9 5"><polygon points="0,0 9,0 4.5,5" fill="#c6c8cf"/></svg>
<div style="left:618px;top:361px;width:189px;height:15px;background:#ffee66;"></div>
<div style="left:618px;top:376px;width:189px;height:1px;background:#c0c0c0;"></div>
<div style="left:618px;top:392px;width:189px;height:1px;background:#c0c0c0;"></div>
<div style="left:618px;top:408px;width:189px;height:1px;background:#c0c0c0;"></div>
<div style="left:653px;top:361px;width:1px;height:48px;background:#c8c8c8;"></div>
<span class="t" style="left:622.00px;top:361.00px;height:16px;line-height:16px;font-size:11.8px;color:#000;">2</span>
<span class="t" style="left:655.55px;top:361.00px;height:16px;line-height:16px;font-size:11.8px;color:#000;transform:scaleX(0.9342);">AxisStep</span>
<span class="t" style="left:622.00px;top:377.00px;height:16px;line-height:16px;font-size:11.8px;color:#000;">1</span>
<span class="t" style="left:655.55px;top:377.00px;height:16px;line-height:16px;font-size:11.8px;color:#000;transform:scaleX(0.9377);">Expr</span>
<span class="t" style="left:622.00px;top:393.00px;height:16px;line-height:16px;font-size:11.8px;color:#000;">0</span>
<span class="t" style="left:655.55px;top:393.00px;height:16px;line-height:16px;font-size:11.8px;color:#000;transform:scaleX(0.9420);">SimpleForExpr</span>
<div style="left:825px;top:345px;width:2px;height:122px;background:#fbfbfb;"></div>
<div style="left:827px;top:345px;width:1px;height:3px;background:#a0a0a0;"></div>
<div style="left:827px;top:375px;width:1px;height:92px;background:#a0a0a0;"></div>
<div style="left:825px;top:348px;width:22px;height:27px;background:#fff;"></div>
<div style="left:827px;top:347px;width:21px;height:1px;background:#b0b0b0;"></div>
<div style="left:847px;top:347px;width:1px;height:29px;background:#a0a0a0;"></div>
<div style="left:827px;top:375px;width:21px;height:1px;background:#a0a0a0;"></div>
<svg style="left:827px;top:351px;" width="20" height="19" viewBox="827 351 20 19"><g stroke="#1c1c1c" stroke-width="1" stroke-dasharray="1.3 0.5" stroke-linejoin="round"><path d="M829.2 363.4 L837 359.6 L844.8 363.4 L837 367.3 Z" fill="#e8e8e8"/><path d="M829.2 360.4 L837 356.6 L844.8 360.4 L837 364.3 Z" fill="#e8e8e8"/><path d="M829.2 357.4 L837 353.5 L844.8 357.4 L837 361.2 Z" fill="#cecece"/></g></svg>
<svg style="left:828px;top:379px;" width="18" height="18" viewBox="0 0 18 18"><circle cx="12" cy="6" r="5" fill="#e83030"/><circle cx="6" cy="11.6" r="5" fill="#1f66d0"/></svg>
<div style="left:11px;top:477px;width:71px;height:19px;background:#e1e1e1;border:1px solid #adadad;"></div>
<span class="t" style="left:13.90px;top:481.00px;height:14px;line-height:14px;font-size:11px;color:#000;transform:scaleX(1.0129);">Using Java...</span>
<div style="left:91px;top:477px;width:71px;height:19px;background:#e1e1e1;border:1px solid #adadad;"></div>
<span class="t" style="left:93.70px;top:481.00px;height:14px;line-height:14px;font-size:11px;color:#000;transform:scaleX(1.0065);">Using .NET...</span>
<div style="left:693px;top:477px;width:69px;height:17px;background:#e1e1e1;border:2px solid #0078d7;"></div>
<span class="t" style="left:721.00px;top:481.00px;height:14px;line-height:14px;font-size:11px;color:#000;transform:scaleX(0.9438);">OK</span>
<div style="left:775px;top:477px;width:71px;height:19px;background:#e1e1e1;border:1px solid #adadad;"></div>
<span class="t" style="left:793.80px;top:481.00px;height:14px;line-height:14px;font-size:11px;color:#000;transform:scaleX(0.9565);">Cancel</span>

</div></body></html>
